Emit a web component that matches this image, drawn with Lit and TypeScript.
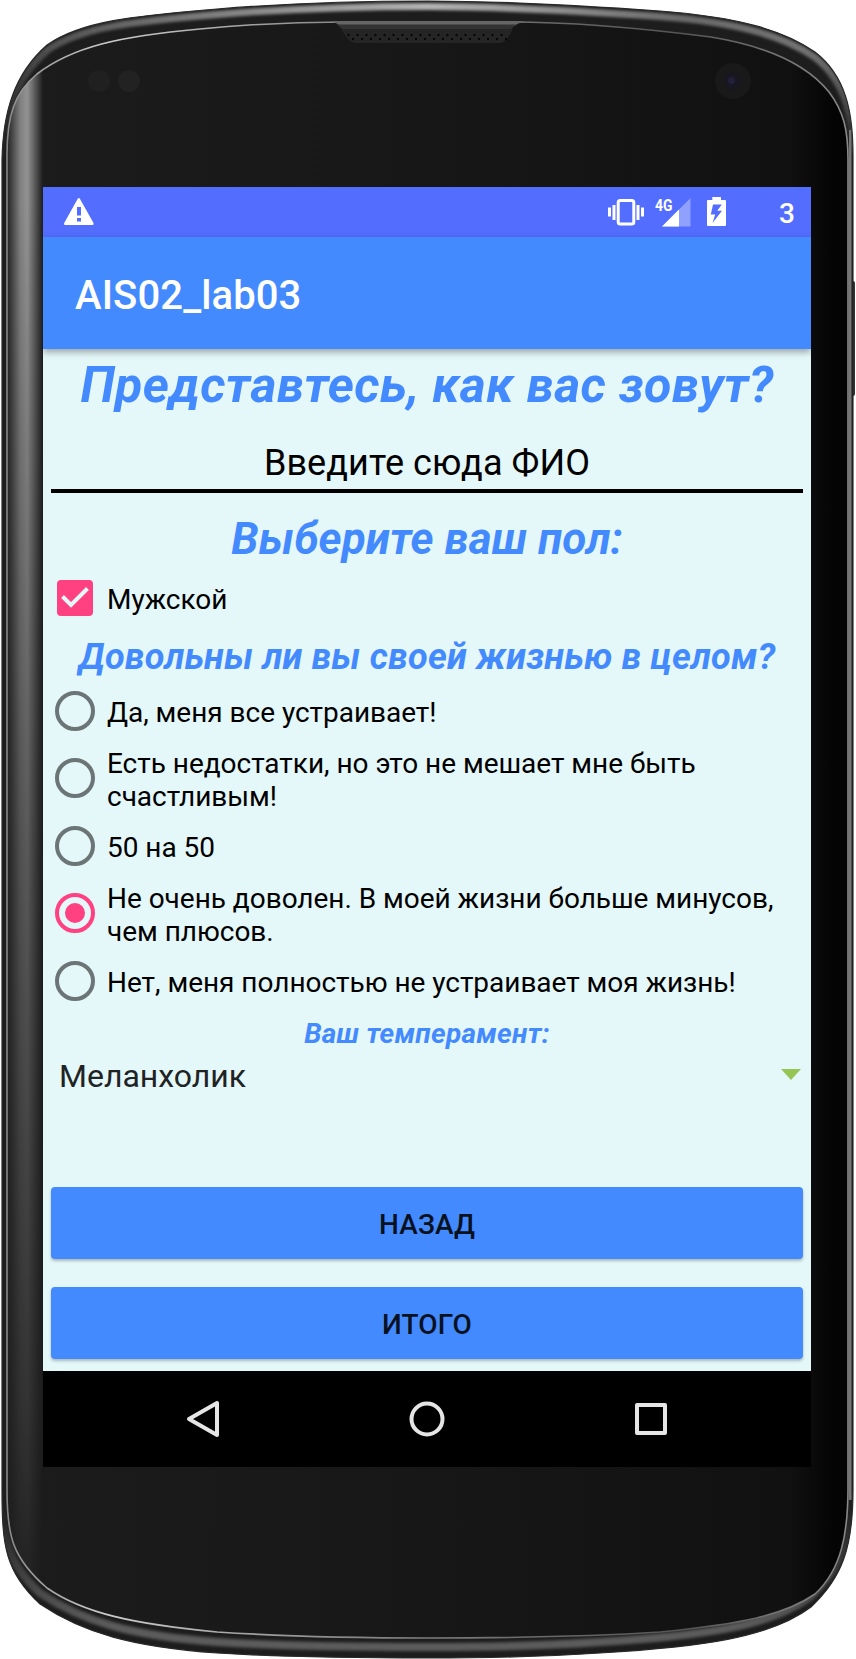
import { LitElement, html, css, svg } from "lit";
import { customElement, property, state } from "lit/decorators.js";
import { classMap } from "lit/directives/class-map.js";

const BODY = `M2,160 C3,112 14,74 47,45 C81,21 133,16 217,9 C290,3 360,1 428,1
  C500,1 573,5 660,11 C740,17 785,31 815,52 C846,76 853,112 853,155
  L853,1490 C853,1548 842,1578 811,1607 C770,1638 700,1647 600,1653 C540,1657 480,1658 428,1658
  C340,1658 280,1657 217,1653 C133,1647 83,1633 40,1604 C5,1572 2,1545 2,1490 Z`;
const FACE = `M7,155 C7,116 14,93 37,74 C72,47 120,36 200,29 C260,23 300,22 345,22
  L510,22 C573,22 640,28 711,37 C772,47 808,66 829,92 C844,112 848,130 848,160
  L848,1488 C848,1532 842,1569 815,1594 C783,1616 740,1624 660,1632 C580,1637 500,1638 428,1638
  C340,1638 280,1636 217,1632 C133,1624 83,1613 47,1588 C12,1558 7,1535 7,1490 Z`;

@customElement("phone-bezel")
export class PhoneBezel extends LitElement {
  static styles = css`
    :host { display: block; }
    svg { display: block; }
  `;
  render() {
    return html`<svg width="856" height="1659" viewBox="0 0 856 1659">
      <defs>
        <linearGradient id="face" x1="0" y1="0" x2="1" y2="0">
          <stop offset="0" stop-color="#1c1c1c"></stop>
          <stop offset="0.5" stop-color="#171717"></stop>
          <stop offset="0.93" stop-color="#111"></stop>
          <stop offset="0.985" stop-color="#040404"></stop>
          <stop offset="1" stop-color="#040404"></stop>
        </linearGradient>
        <linearGradient id="shine" x1="0" y1="0" x2="1" y2="0">
          <stop offset="0" stop-color="#999" stop-opacity="0.1"></stop>
          <stop offset="0.35" stop-color="#999" stop-opacity="0.8"></stop>
          <stop offset="0.55" stop-color="#999" stop-opacity="0.95"></stop>
          <stop offset="0.72" stop-color="#999" stop-opacity="0.6"></stop>
          <stop offset="1" stop-color="#999" stop-opacity="0"></stop>
        </linearGradient>
        <linearGradient id="fade" x1="0" y1="0" x2="0" y2="1">
          <stop offset="0" stop-color="#fff"></stop>
          <stop offset="0.12" stop-color="#fff"></stop>
          <stop offset="0.5" stop-color="#888"></stop>
          <stop offset="0.85" stop-color="#333"></stop>
          <stop offset="1" stop-color="#000"></stop>
        </linearGradient>
        <mask id="fadeMask"><rect width="60" height="1659" fill="url(#fade)"></rect></mask>
        <clipPath id="bodyClip"><path d=${BODY}></path></clipPath>
        <clipPath id="faceClip"><path d=${FACE}></path></clipPath>
        <linearGradient id="topFade" x1="0" y1="0" x2="0" y2="1">
          <stop offset="0.3" stop-color="#fff"></stop>
          <stop offset="1" stop-color="#000"></stop>
        </linearGradient>
        <linearGradient id="bottomFade" x1="0" y1="0" x2="0" y2="1">
          <stop offset="0" stop-color="#000"></stop>
          <stop offset="0.8" stop-color="#fff"></stop>
        </linearGradient>
        <mask id="topMask" maskUnits="userSpaceOnUse" x="0" y="0" width="856" height="1659">
          <rect width="856" height="160" fill="url(#topFade)"></rect>
        </mask>
        <mask id="bottomMask" maskUnits="userSpaceOnUse" x="0" y="0" width="856" height="1659">
          <rect y="1500" width="856" height="159" fill="url(#bottomFade)"></rect>
        </mask>
        <linearGradient id="topGlow" x1="0" y1="0" x2="1" y2="0">
          <stop offset="0" stop-color="#444"></stop>
          <stop offset="0.25" stop-color="#808080"></stop>
          <stop offset="0.5" stop-color="#b4b4b4"></stop>
          <stop offset="0.8" stop-color="#6a6a6a"></stop>
          <stop offset="1" stop-color="#777"></stop>
        </linearGradient>
        <linearGradient id="line" x1="0" y1="0" x2="1" y2="0">
          <stop offset="0" stop-color="#888"></stop>
          <stop offset="0.12" stop-color="#ccc"></stop>
          <stop offset="0.4" stop-color="#888"></stop>
          <stop offset="0.8" stop-color="#555"></stop>
          <stop offset="1" stop-color="#888"></stop>
        </linearGradient>
        <filter id="soft" filterUnits="userSpaceOnUse" x="0" y="-20" width="856" height="1700">
          <feGaussianBlur stdDeviation="1.4"></feGaussianBlur>
        </filter>
        <pattern id="holes" x="346" y="33" width="9" height="9" patternUnits="userSpaceOnUse">
          <circle cx="2.5" cy="2" r="1.2" fill="#050505"></circle>
          <circle cx="7" cy="6" r="1.2" fill="#050505"></circle>
        </pattern>
      </defs>
      <rect x="850" y="281" width="5" height="115" rx="2" fill="#333"></rect>
      <path d=${BODY} fill="#1d1d1e"></path>
      <g clip-path="url(#bodyClip)">
        <g mask="url(#topMask)">
          <path d=${BODY} fill="none" stroke="url(#topGlow)" stroke-width="7" filter="url(#soft)" transform="translate(0 5.5)"></path>
        </g>
        <g mask="url(#bottomMask)">
          <path d=${BODY} fill="none" stroke="#5c5c5c" stroke-width="8" filter="url(#soft)" transform="translate(0 -11)"></path>
        </g>
        <rect x="849" y="130" width="2.500" height="1370" fill="#777"></rect>
      </g>
      <path d=${BODY} fill="none" stroke="#292929" stroke-width="1.2"></path>
      <path d=${FACE} fill="url(#face)" stroke="url(#line)" stroke-width="1.6"></path>
      <g clip-path="url(#faceClip)">
        <rect x="8" y="60" width="35" height="1599" fill="url(#shine)" mask="url(#fadeMask)"></rect>
      </g>
      <path d="M331,21 L525,21 Q518,23 511,28 L343,28 Q337,23 331,21Z" fill="#666"></path>
      <path d="M337,24.500 H516 L511,29 H342Z" fill="#333"></path>
      <path d="M341,29 H513 Q506,43 500,43 H355 Q349,43 341,29Z" fill="#252525"></path>
      <rect x="347" y="33" width="160" height="9" fill="url(#holes)"></rect>
      <circle cx="99" cy="81" r="11" fill="#202020"></circle>
      <circle cx="129" cy="81" r="11" fill="#222"></circle>
      <circle cx="733" cy="81" r="18" fill="#1a191a"></circle>
      <circle cx="732" cy="81" r="9" fill="#18171f"></circle>
      <circle cx="731.500" cy="80.500" r="3.500" fill="#211f3a"></circle>
    </svg>`;
  }
}

@customElement("status-bar")
export class StatusBar extends LitElement {
  static styles = css`
    :host {
      display: flex;
      height: 50px;
      background: #536dfe;
      color: #fff;
      font: 500 28px/54px Roboto, sans-serif;
    }
    svg { flex: none; height: 50px; }
    .warn { margin-left: 20px; margin-right: auto; }
    .signal { margin-left: 10px; }
    .battery { margin-left: 15px; }
    .clock { margin: 0 16px 0 53px; }
    .net { font: 700 17px Roboto, sans-serif; }
  `;
  render() {
    return html`
      <svg class="warn" width="32" viewBox="0 0 32 50">
        <path fill="#fff" fill-rule="evenodd" d="M15.800 11 Q16.500 11 17 12 L30.500 36 Q31 38 29.500 38 H2 Q.5 38 1.200 36 L14.600 12 Q15 11 15.800 11Z M14 20 V28.500 H18 V20Z M14 31 V34.500 H18 V31Z"></path>
      </svg>
      <svg width="37" viewBox="0 0 37 50">
        <rect x="10.200" y="13.500" width="15.600" height="23.600" rx="2" fill="none" stroke="#fff" stroke-width="3"></rect>
        <path fill="#fff" d="M0 20.500h3v9H0zM4.500 18h3v15h-3zM28.500 18h3v15h-3zM33 20.500h3v9h-3z"></path>
      </svg>
      <svg class="signal" width="37" viewBox="0 0 37 50">
        <path fill="#fff" fill-opacity=".35" d="M35.500 11V39.500H7Z"></path>
        <path fill="#fff" d="M24 22.500V39.500H7Z"></path>
        <text class="net" x="0" y="23.500" fill="#fff" textLength="17.500" lengthAdjust="spacingAndGlyphs">4G</text>
      </svg>
      <svg class="battery" width="19" viewBox="0 0 19 50">
        <path fill="#fff" fill-rule="evenodd" d="M5.300 10H14V13H18Q19 13 19 14V38Q19 39 18 39H1Q0 39 0 38V14Q0 13 1 13H5.300Z M6 17.500 L3.800 27.500 H8.200 L5.500 36 L15 23.700 H10.300 L14.800 17.500Z"></path>
      </svg>
      <span class="clock">3</span>
    `;
  }
}

@customElement("choice-row")
export class ChoiceRow extends LitElement {
  @property() kind = "radio";
  @property({ type: Boolean }) checked = false;
  @property({ type: Boolean }) tall = false;

  static styles = css`
    :host { display: block; }
    .row {
      display: flex;
      align-items: center;
      height: 64px;
      padding-left: 12px;
      color: #000;
      font: 400 28px/33px Roboto, sans-serif;
      letter-spacing: -0.03px;
    }
    .row.tall { height: 71px; }
    svg { flex: none; margin-right: 12px; }
    .tall svg { margin-bottom: 2px; }
    .label { padding-top: 3px; white-space: pre-line; }
  `;

  private mark() {
    if (this.kind === "check") {
      return svg`<rect x="2" y="2" width="36" height="36" rx="4" fill="#ff4081"></rect>
        <path d="M7.500 18.500 L16 27 L32.500 10.500" fill="none" stroke="#e4f7f9" stroke-width="4"></path>`;
    }
    const color = this.checked ? "#ff4081" : "#6b7576";
    return svg`<circle cx="20" cy="20" r="18" fill="none" stroke=${color} stroke-width="4"></circle>
      ${this.checked ? svg`<circle cx="20" cy="20" r="10" fill=${color}></circle>` : null}`;
  }
  render() {
    return html`<div class=${classMap({ row: true, tall: this.tall })}>
      <svg width="40" height="40" viewBox="0 0 40 40">${this.mark()}</svg>
      <span class="label"><slot></slot></span>
    </div>`;
  }
}

@customElement("app-root")
export class AppRoot extends LitElement {
  @state() private mood = 3;
  private moods = [
    "Да, меня все устраивает!",
    "Есть недостатки, но это не мешает мне быть\nсчастливым!",
    "50 на 50",
    "Не очень доволен. В моей жизни больше минусов,\nчем плюсов.",
    "Нет, меня полностью не устраивает моя жизнь!",
  ];

  static styles = css`
    :host {
      display: grid;
      width: 856px;
      height: 1659px;
      overflow: hidden;
      background: #fff;
      font-family: Roboto, sans-serif;
    }
    phone-bezel, .screen { grid-area: 1 / 1; }
    .screen {
      display: flex;
      flex-direction: column;
      width: 768px;
      height: 1280px;
      margin: 187px 0 0 43px;
      background: #e4f7f9;
      z-index: 1;
      overflow: hidden;
    }
    .appbar {
      flex: none;
      height: 112px;
      padding-left: 32px;
      background: #448aff;
      box-shadow: 0 3px 7px rgba(0, 0, 0, 0.35);
      color: #fff;
      font-size: 40px;
      font-weight: 500;
      line-height: 117px;
      letter-spacing: 0.12px;
    }
    .form { flex: 1; display: flex; flex-direction: column; }
    .q {
      color: #448aff;
      font-weight: 700;
      font-style: italic;
      text-align: center;
      white-space: nowrap;
    }
    .name { font-size: 50px; line-height: 72px; letter-spacing: 0.35px; }
    .sex { font-size: 44px; line-height: 53px; padding-top: 20px; letter-spacing: 0.1px; }
    .life { font-size: 36px; line-height: 44px; padding-top: 5px; letter-spacing: 0.2px; }
    .temper { font-size: 28px; line-height: 41px; letter-spacing: 0.25px; }
    .field {
      margin: 0 8px;
      padding-top: 17px;
      border-bottom: 4px solid #000;
      color: #000;
      font-size: 36px;
      line-height: 51px;
      letter-spacing: 0.07px;
      text-align: center;
    }
    .spinner {
      display: flex;
      align-items: center;
      justify-content: space-between;
      padding: 0 10px 0 16px;
      color: #202324;
      font-size: 32px;
      line-height: 44px;
    }
    .spinner svg { margin-bottom: 4px; }
    .buttons {
      display: flex;
      flex-direction: column;
      gap: 28px;
      margin: auto 8px 12px;
    }
    .btn {
      height: 72px;
      border-radius: 4px;
      background: #448aff;
      box-shadow: 0 2px 3px rgba(0, 0, 0, 0.25);
      color: #08121f;
      font-size: 28px;
      font-weight: 500;
      line-height: 75px;
      letter-spacing: 0.1px;
      text-align: center;
    }
    .nav {
      flex: none;
      height: 96px;
      background: #000;
      display: flex;
      justify-content: center;
      gap: 184px;
      align-items: center;
    }
    .nav svg { fill: none; stroke: #e6e6e6; stroke-width: 4; stroke-linejoin: round; }
  `;

  render() {
    return html`
      <phone-bezel></phone-bezel>
      <main class="screen">
        <status-bar></status-bar>
        <div class="appbar">AIS02_lab03</div>
        <div class="form">
          <div class="q name">Представтесь, как вас зовут?</div>
          <div class="field">Введите сюда ФИО</div>
          <div class="q sex">Выберите ваш пол:</div>
          <choice-row kind="check" checked>Мужской</choice-row>
          <div class="q life">Довольны ли вы своей жизнью в целом?</div>
          ${this.moods.map(
            (m, i) => html`<choice-row
              ?checked=${i === this.mood}
              ?tall=${m.includes("\n")}
              @click=${() => (this.mood = i)}
              >${m}</choice-row>`
          )}
          <div class="q temper">Ваш темперамент:</div>
          <div class="spinner">
            <span>Меланхолик</span>
            <svg width="20" height="11" viewBox="0 0 20 11"><path d="M0 0H20L10 11Z" fill="#95c655"></path></svg>
          </div>
          <div class="buttons">
            <div class="btn">НАЗАД</div>
            <div class="btn">ИТОГО</div>
          </div>
        </div>
        <nav class="nav">
          <svg width="40" height="40" viewBox="0 0 40 40"><path d="M34 4V36L6 20Z"></path></svg>
          <svg width="40" height="40" viewBox="0 0 40 40"><circle cx="20" cy="20" r="15.500"></circle></svg>
          <svg width="40" height="40" viewBox="0 0 40 40"><rect x="6" y="6" width="28" height="28"></rect></svg>
        </nav>
      </main>
    `;
  }
}
